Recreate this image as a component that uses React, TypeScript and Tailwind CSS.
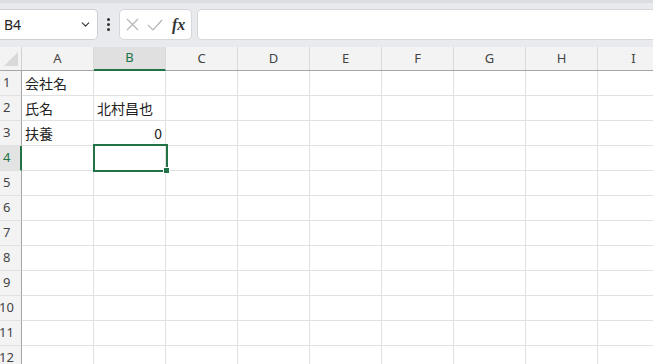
import { ChevronDown } from 'lucide-react';

const COLS = ['A', 'B', 'C', 'D', 'E', 'F', 'G', 'H', 'I'];
const ROWS = [1, 2, 3, 4, 5, 6, 7, 8, 9, 10, 11, 12];

const cells: Record<string, { text: string; right?: boolean }> = {
  A1: { text: '会社名' },
  A2: { text: '氏名' },
  B2: { text: '北村昌也' },
  A3: { text: '扶養' },
  B3: { text: '0', right: true },
};

const ui = '"Noto Sans", "Liberation Sans", sans-serif';
const jp = '"Noto Sans CJK JP", "Noto Sans", sans-serif';

function FormulaBar() {
  return (
    <div className="bg-[#e9eaed] h-[47px] flex flex-col">
      {/* top strip */}
      <div className="h-[3px] bg-[#dcdde0]" />
      <div className="flex items-center h-[31px] mt-[6px] pr-0">
        {/* name box */}
        <div className="w-[98px] h-[31px] bg-white border border-[#cfd0d3] border-l-0 rounded-r-[5px] flex items-center justify-between pl-[4px] pr-[5px]">
          <span className="text-[14px] text-[#222]" style={{ fontFamily: ui }}>
            B4
          </span>
          <ChevronDown size={13} strokeWidth={2} className="text-[#333]" />
        </div>
        {/* more dots */}
        <div className="w-[21px] flex flex-col items-center gap-[2px]">
          <span className="w-[3px] h-[3px] rounded-full bg-[#333]" />
          <span className="w-[3px] h-[3px] rounded-full bg-[#333]" />
          <span className="w-[3px] h-[3px] rounded-full bg-[#333]" />
        </div>
        {/* cancel / enter / fx */}
        <div className="w-[73px] h-[31px] bg-white border border-[#d6d7da] rounded-[5px] flex items-center pl-[6px] gap-[8px]">
          <svg width="13" height="13" viewBox="0 0 13 13" className="text-[#b5b5b5]">
            <path d="M1 1 L12 12 M12 1 L1 12" stroke="currentColor" strokeWidth="1.2" fill="none" />
          </svg>
          <svg width="16" height="12" viewBox="0 0 16 12" className="text-[#b5b5b5]">
            <path d="M1 6 L6 11 L15 1" stroke="currentColor" strokeWidth="1.2" fill="none" />
          </svg>
          <span
            className="text-[16px] italic font-bold text-[#333] leading-none ml-[1px]"
            style={{ fontFamily: '"Liberation Serif", "DejaVu Serif", serif' }}
          >
            fx
          </span>
        </div>
        {/* formula input */}
        <div className="flex-1 h-[31px] ml-[5px] bg-white border border-[#d6d7da] border-r-0 rounded-l-[5px]" />
      </div>
    </div>
  );
}

function Grid() {
  return (
    <div className="flex flex-col" style={{ fontFamily: ui }}>
      {/* column header */}
      <div className="flex h-[24px] bg-[#f3f3f3] border-b border-[#a6a6a6]">
        <div className="w-[22px] shrink-0 border-r border-[#d0d0d0] relative">
          <svg width="22" height="23" viewBox="0 0 22 23" className="absolute left-0 top-0">
            <path d="M4 19 L18 5 L18 19 Z" fill="#d9d9d9" />
          </svg>
        </div>
        {COLS.map((c) => {
          const sel = c === 'B';
          return (
            <div
              key={c}
              className={`w-[72px] shrink-0 flex items-center justify-center text-[13px] border-r border-[#d9d9d9] ${
                sel ? 'bg-[#e0e0e0] text-[#217346] border-b-2 border-b-[#217346] -mb-px' : 'text-[#444]'
              }`}
            >
              {c}
            </div>
          );
        })}
      </div>
      {ROWS.map((r) => {
        const selRow = r === 4;
        return (
          <div key={r} className="flex h-[25px]">
            <div
              className={`w-[22px] shrink-0 flex items-center text-[13px] border-b border-[#e1e1e1] ${
                selRow
                  ? 'bg-[#e3e3e3] text-[#217346] border-r-2 border-r-[#217346]'
                  : 'bg-[#f3f3f3] text-[#444] border-r border-r-[#a6a6a6]'
              }`}
            >
              <span className={r >= 10 ? '-ml-px' : 'pl-[3px]'}>{r}</span>
            </div>
            {COLS.map((c) => {
              const key = `${c}${r}`;
              const cell = cells[key];
              const active = key === 'B4';
              return (
                <div
                  key={key}
                  className={`w-[72px] shrink-0 relative flex items-center px-[3px] border-r border-b border-[#e1e1e1] ${
                    cell?.right ? 'justify-end' : 'justify-start'
                  }`}
                >
                  {cell && (
                    <span className="text-[14px] text-[#222] whitespace-nowrap" style={{ fontFamily: jp }}>
                      {cell.text}
                    </span>
                  )}
                  {active && (
                    <>
                      <div className="absolute -left-px -top-[2px] w-[75px] h-[28px] border-2 border-[#217346] z-10" />
                      <div className="absolute left-[69px] top-[21px] w-[7px] h-[7px] bg-[#217346] border border-white z-20" />
                    </>
                  )}
                </div>
              );
            })}
          </div>
        );
      })}
    </div>
  );
}

export default function App() {
  return (
    <div className="w-[653px] h-[364px] overflow-hidden bg-white">
      <FormulaBar />
      <Grid />
    </div>
  );
}
